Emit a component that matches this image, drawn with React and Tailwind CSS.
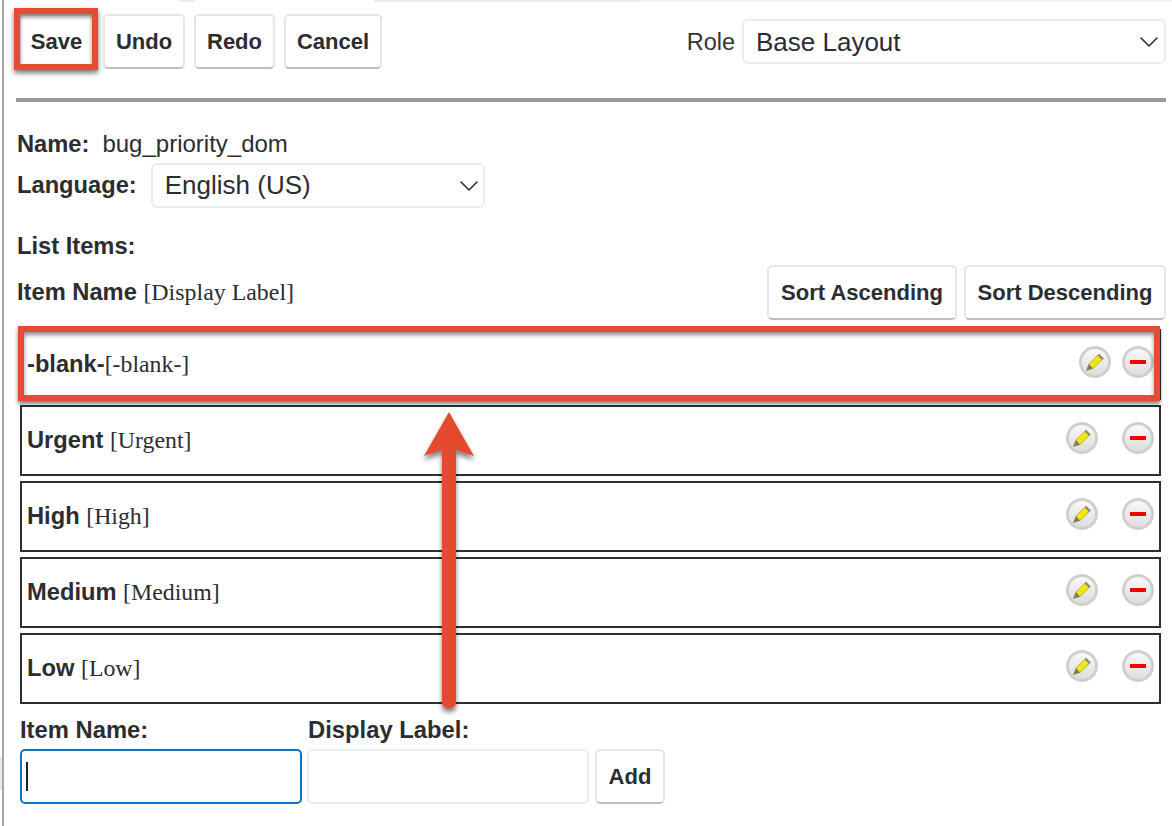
import { ChevronDown } from 'lucide-react';

const sans = "font-['Liberation_Sans',Arial,sans-serif]";
const serif = "font-['Liberation_Serif',serif] font-normal";
const btn = 'flex items-center justify-center rounded-[5px] border-2 border-[#e4e6e8] border-b-[#bfbfbf] bg-white font-bold text-[#2b2d30] text-[22px] ' + sans;

function Knob({ children, id }) {
  return (
    <svg viewBox="0 0 34 34" className="h-[34px] w-[34px]">
      <defs>
        <linearGradient id={id} x1="0" y1="0" x2="0" y2="1">
          <stop offset="0" stopColor="#fafafa" />
          <stop offset="1" stopColor="#dcdcdc" />
        </linearGradient>
      </defs>
      <circle cx="17" cy="17" r="14.5" fill={`url(#${id})`} stroke="#cfcfcf" strokeWidth="3" />
      {children}
    </svg>
  );
}

function Pencil({ id }) {
  return (
    <Knob id={id}>
      <path d="M8.5 25.5 L11 19 L21 9 L25.5 13.5 L15 23.5 Z" fill="#efe80a" stroke="#a9a33a" strokeWidth="0.8" />
      <path d="M8.5 25.5 L11 19 L15 23.5 Z" fill="#7b7b6c" />
      <path d="M21 9 L25.5 13.5 L24 15 L19.5 10.5 Z" fill="#8c8c80" />
    </Knob>
  );
}

function Minus({ id }) {
  return (
    <Knob id={id}>
      <rect x="9" y="15" width="16" height="4" fill="#ee0000" />
    </Knob>
  );
}

function Row({ name, label, first }) {
  return (
    <div className="flex h-[71px] items-center justify-between border-2 border-[#2f2f2f] pl-[5px] pr-[4px]">
      <div className={'text-[23.7px] ' + sans}>
        <span className="font-bold">{name}</span>
        {!first && ' '}
        <span className={serif + ' text-[23.8px]'}>[{label}]</span>
      </div>
      <div className={'-mt-[6px] flex items-center ' + (first ? 'gap-[9px]' : 'gap-[22px]')}>
        <Pencil id={'p' + name} />
        <Minus id={'m' + name} />
      </div>
    </div>
  );
}

export default function App() {
  return (
    <div className={'relative h-[826px] w-[1172px] overflow-hidden bg-white text-[#2b2d30] ' + sans}>
      <div className="ml-[2px] h-full border-l-2 border-[#a8a8a8] pl-[12px] pr-[6px]">
        {/* cut-off tabs along the top edge */}
        <div className="-mr-[6px] flex h-[2px]">
          <div className="ml-[163px] w-[16px] bg-[#e8ecef]" />
          <div className="ml-[179px] w-[267px] bg-[#e6eaed]" />
          <div className="flex-1 bg-[#f2f2f2]" />
        </div>

        {/* toolbar */}
        <div className="flex h-[96px] items-start pt-[12px]">
          <div className="ml-[3px] flex gap-[9px]">
            <button className={btn + ' h-[55px] w-[75px]'}>Save</button>
            <button className={btn + ' h-[55px] w-[82px]'}>Undo</button>
            <button className={btn + ' h-[55px] w-[81px]'}>Redo</button>
            <button className={btn + ' h-[55px] w-[98px]'}>Cancel</button>
          </div>
          <div className="ml-auto mt-[5px] flex items-center gap-[7px]">
            <span className="mt-[3px] text-[23.5px] text-[#333]">Role</span>
            <div className="flex h-[45px] w-[424px] items-center justify-between rounded-[6px] border-2 border-[#e8edf0] pl-[12px] text-[26px]">
              <span className="pt-px">Base Layout</span>
              <ChevronDown size={32} strokeWidth={1.2} className="-mr-px" />
            </div>
          </div>
        </div>
        <div className="h-[4px] w-[1150px] bg-[#999999]" />

        {/* name and language */}
        <div className="ml-px mt-[28px] flex h-[28px] items-center text-[24px]">
          <span className="pt-px text-[23.7px] font-bold">Name:</span>
          <span className="ml-[13px]">bug_priority_dom</span>
        </div>
        <div className="ml-px mt-[5px] flex items-center text-[23.7px]">
          <span className="font-bold">Language:</span>
          <div className="ml-[14px] flex h-[45px] w-[334px] items-center justify-between rounded-[6px] border-2 border-[#e8edf0] pl-[12px] text-[26px]">
            English (US)
            <ChevronDown size={32} strokeWidth={1.2} className="-mr-[2px]" />
          </div>
        </div>

        {/* list header */}
        <div className="ml-px mt-[24px] text-[23.7px] font-bold leading-[28px]">List Items:</div>
        <div className="ml-px mt-[5px] flex items-center justify-between">
          <div className="text-[23.7px]">
            <span className="font-bold">Item Name</span>{' '}
            <span className={serif + ' text-[23.9px]'}>[Display Label]</span>
          </div>
          <div className="flex gap-[7px]">
            <button className={btn + ' h-[55px] w-[190px]'}>Sort Ascending</button>
            <button className={btn + ' h-[55px] w-[202px]'}>Sort Descending</button>
          </div>
        </div>

        {/* rows */}
        <div className="ml-[4px] mt-[9px] flex w-[1141px] flex-col gap-[5px]">
          <Row name="-blank-" label="-blank-" first />
          <Row name="Urgent" label="Urgent" />
          <Row name="High" label="High" />
          <Row name="Medium" label="Medium" />
          <Row name="Low" label="Low" />
        </div>

        {/* add form */}
        <div className="ml-[4px] mt-[8px] flex items-end gap-[5px]">
          <label className="flex flex-col gap-px text-[23.8px] font-bold">
            Item Name:
            <div className="flex h-[55px] w-[282px] items-center rounded-[5px] border-2 border-[#0b74c6] pl-[4px]">
              <div className="h-[29px] w-[2px] bg-[#222]" />
            </div>
          </label>
          <label className="flex flex-col gap-px text-[23.8px] font-bold">
            <span className="pl-px">Display Label:</span>
            <div className="h-[55px] w-[282px] rounded-[5px] border-2 border-[#e8edf0]" />
          </label>
          <button className={btn + ' ml-px h-[55px] w-[70px]'}>Add</button>
        </div>
      </div>

      {/* annotation overlays */}
      <div className="absolute left-0 top-[757px] h-[33px] w-[2px] bg-[#e8e8e8]" />
      <div className="absolute left-[14px] top-[8px] h-[62px] w-[84px] border-[6px] border-[#e64c33] shadow-[0_3px_5px_rgba(0,0,0,0.55),inset_0_3px_4px_rgba(0,0,0,0.45)]" />
      <div className="absolute left-[18px] top-[326px] h-[75px] w-[1142px] border-[6px] border-[#e64c33] shadow-[0_3px_4px_rgba(0,0,0,0.5),inset_0_3px_4px_rgba(0,0,0,0.45)]" />
      <svg className="absolute left-[415px] top-[405px] h-[320px] w-[70px]" viewBox="0 0 70 320">
        <defs>
          <filter id="arrowShadow" x="-30%" y="-5%" width="160%" height="110%">
            <feDropShadow dx="0" dy="4" stdDeviation="2.5" floodColor="#000" floodOpacity="0.5" />
          </filter>
        </defs>
        <path
          d="M34 7 L59 51 L41 45 L41 298 Q41 303 34 303 Q27 303 27 298 L27 45 L9 51 Z"
          fill="#e34b2e"
          filter="url(#arrowShadow)"
        />
      </svg>
    </div>
  );
}
